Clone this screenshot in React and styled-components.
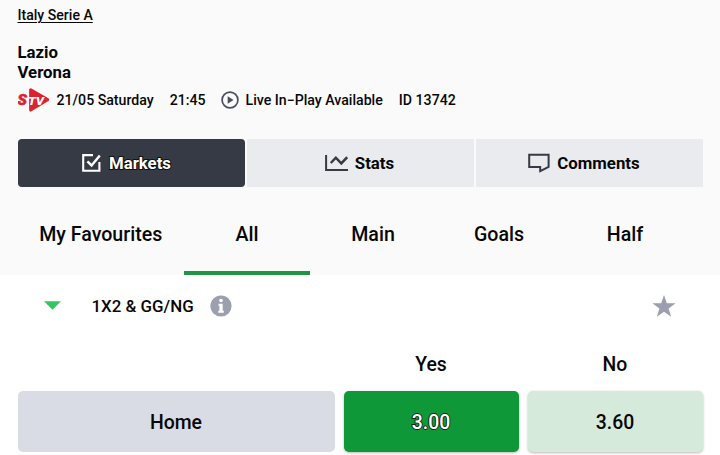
import React, { useState } from 'react';
import styled, { createGlobalStyle } from 'styled-components';

const GlobalStyle = createGlobalStyle`
  * {
    box-sizing: border-box;
  }
  body {
    margin: 0;
    background: #ffffff;
    color: #070707;
    font-family: Roboto, "Liberation Sans", sans-serif;
    overflow: hidden;
  }
  button {
    font-family: inherit;
    color: inherit;
    border: none;
    padding: 0;
    cursor: pointer;
  }
`;

const Page = styled.div`
  width: 720px;
  height: 455px;
  overflow: hidden;
  background: #ffffff;
`;

const Header = styled.header`
  height: 274.5px;
  padding: 5px 17.5px 0 17.5px;
  background: #fafafa;
`;

const League = styled.a`
  display: block;
  width: fit-content;
  height: 20px;
  line-height: 20px;
  font-size: 14.1px;
  font-weight: 500;
  text-decoration: underline;
  text-decoration-thickness: 1px;
  text-underline-offset: 2px;
`;

const Teams = styled.div`
  margin-top: 17px;
  font-size: 16.8px;
  font-weight: 700;
  line-height: 20px;
`;

const Meta = styled.div`
  display: flex;
  align-items: center;
  height: 26px;
  margin-top: 5px;
  font-size: 14.15px;
  font-weight: 500;
  white-space: nowrap;
`;

const MetaItem = styled.span`
  margin-left: ${({ $gap }) => $gap}px;
`;

const Icon = styled.svg`
  display: block;
  flex: none;
`;

const Views = styled.div`
  display: grid;
  grid-template-columns: 227px 227px 227px;
  gap: 2px;
  height: 48.5px;
  margin-top: 25.5px;
`;

const ViewButton = styled.button`
  display: flex;
  align-items: center;
  justify-content: center;
  gap: 7px;
  padding-right: ${({ $shift }) => $shift}px;
  font-size: 16.8px;
  font-weight: 700;
  border-radius: ${({ $active }) => ($active ? '4px' : '0')};
  background: ${({ $active }) => ($active ? '#363a45' : '#eaebef')};
  color: ${({ $active }) => ($active ? '#ffffff' : '#070707')};
  -webkit-text-stroke: ${({ $active }) => ($active ? '2px #111111' : '0')};
  paint-order: stroke fill;
`;

const Tabs = styled.nav`
  display: grid;
  grid-template-columns: 166.5px repeat(4, 126px);
  height: 87.5px;
`;

const Tab = styled.button`
  background: transparent;
  padding-top: 11px;
  border-bottom: 4px solid ${({ $active }) => ($active ? '#1f9445' : 'transparent')};
  font-size: 19.6px;
  font-weight: 500;
`;

const MarketBar = styled.div`
  display: flex;
  align-items: center;
  height: 62.5px;
  padding: 0 44px;
`;

const MarketName = styled.span`
  margin: 0 16px 0 30.5px;
  font-size: 16.9px;
  font-weight: 500;
`;

const StarIcon = styled(Icon)`
  margin-left: auto;
`;

const OddsGrid = styled.div`
  display: grid;
  grid-template-columns: 317px 175px 175px;
  grid-template-rows: 54px 60.5px;
  column-gap: 9px;
  padding: 0 17.5px;
`;

const Column = styled.div`
  display: flex;
  align-items: center;
  justify-content: center;
  font-size: 19.4px;
  font-weight: 500;
`;

const Outcome = styled(Column)`
  padding-top: 2px;
  border-radius: 5px;
  background: #dadce5;
`;

const Odd = styled.button`
  padding-top: 2px;
  border-radius: 5px;
  font-size: 19.4px;
  font-weight: 500;
  background: ${({ $selected }) => ($selected ? '#0f9837' : '#d6eadc')};
  color: ${({ $selected }) => ($selected ? '#ffffff' : '#070707')};
  -webkit-text-stroke: ${({ $selected }) => ($selected ? '1.8px #10200f' : '0')};
  paint-order: stroke fill;
  box-shadow: 0 1px 3px rgba(0, 0, 0, 0.28);
`;

const LogoText = styled.text`
  font-family: Roboto, sans-serif;
  font-style: italic;
  font-weight: 900;
`;

const StvLogo = () => (
  <Icon width="32" height="26" viewBox="0 0 32 26">
    <path
      d="M12.7 2.8 L29.6 12.6 L12.7 23 Z"
      fill="#da2430"
      stroke="#da2430"
      strokeWidth="3.2"
      strokeLinejoin="round"
    />
    <LogoText x="-0.4" y="18" fontSize="15.5" fill="#da2430" stroke="#da2430" strokeWidth="0.6">S</LogoText>
    <LogoText x="10" y="17.6" fontSize="11.8" fill="#ffffff" textLength="16" lengthAdjust="spacingAndGlyphs">TV</LogoText>
  </Icon>
);

const PlayIcon = () => (
  <Icon width="18" height="18" viewBox="0 0 18 18">
    <circle cx="9" cy="9" r="7.9" fill="none" stroke="#4a4e5a" strokeWidth="1.7" />
    <path d="M6.7 5.2 L12.5 9 L6.7 12.8 Z" fill="#4a4e5a" />
  </Icon>
);

const MarketsIcon = () => (
  <Icon width="21" height="20" viewBox="0 0 21 20" fill="none" stroke="#ffffff" strokeWidth="2.1">
    <path d="M12 2.1 H2.2 V17.8 H18.4 V9" />
    <path d="M6.4 8.3 L10.6 12.4 L18.8 2.6" strokeWidth="2.4" />
  </Icon>
);

const StatsIcon = () => (
  <Icon width="23" height="18" viewBox="0 0 23 18" fill="none" stroke="#363a45">
    <path d="M1.1 1 V16.1 H23" strokeWidth="2" />
    <path d="M5.8 9 L10.8 3.7 L16.3 9.4 L22.2 3.2" strokeWidth="2.5" />
  </Icon>
);

const CommentsIcon = () => (
  <Icon width="22" height="20" viewBox="0 0 22 20" fill="none" stroke="#363a45" strokeWidth="2">
    <path d="M1.2 1.7 H20.6 V14 L12.2 18.2 V14 H1.2 Z" />
  </Icon>
);

const InfoIcon = () => (
  <Icon width="22" height="22" viewBox="0 0 22 22">
    <circle cx="11" cy="11" r="10.6" fill="#9b9fae" />
    <circle cx="11" cy="5.5" r="1.8" fill="#ffffff" />
    <path d="M8.5 8.8 H12.7 V15.8 H13.8 V17.8 H8.2 V15.8 H9.4 V10.7 H8.5 Z" fill="#ffffff" />
  </Icon>
);

const VIEWS = [
  { label: 'Markets', icon: MarketsIcon, shift: 10 },
  { label: 'Stats', icon: StatsIcon, shift: 1 },
  { label: 'Comments', icon: CommentsIcon, shift: 10 },
];

const TABS = ['My Favourites', 'All', 'Main', 'Goals', 'Half'];

const App = () => {
  const [view, setView] = useState('Markets');
  const [tab, setTab] = useState('All');
  const [odd, setOdd] = useState('3.00');

  return (
    <Page>
      <GlobalStyle />
      <Header>
        <League>Italy Serie A</League>
        <Teams>
          <div>Lazio</div>
          <div>Verona</div>
        </Teams>
        <Meta>
          <StvLogo />
          <MetaItem $gap={7}>21/05 Saturday</MetaItem>
          <MetaItem $gap={16}>21:45</MetaItem>
          <MetaItem $gap={15}><PlayIcon /></MetaItem>
          <MetaItem $gap={7}>Live In−Play Available</MetaItem>
          <MetaItem $gap={16}>ID 13742</MetaItem>
        </Meta>
        <Views>
          {VIEWS.map(({ label, icon: ViewIcon, shift }) => (
            <ViewButton
              key={label}
              $active={view === label}
              $shift={shift}
              onClick={() => setView(label)}
            >
              <ViewIcon />
              {label}
            </ViewButton>
          ))}
        </Views>
        <Tabs>
          {TABS.map((name) => (
            <Tab key={name} $active={tab === name} onClick={() => setTab(name)}>{name}</Tab>
          ))}
        </Tabs>
      </Header>
      <MarketBar>
        <Icon width="17" height="9" viewBox="0 0 17 9">
          <path d="M0 0.3 H17 L8.5 8.8 Z" fill="#35c75f" />
        </Icon>
        <MarketName>1X2 &amp; GG/NG</MarketName>
        <InfoIcon />
        <StarIcon width="24" height="22" viewBox="0 0 24 22">
          <path
            d="M12 0 L14.8 8.2 L23.6 8.3 L16.6 13.4 L19.1 21.7 L12 16.8 L4.9 21.7 L7.4 13.4 L0.4 8.3 L9.2 8.2 Z"
            fill="#9b9fae"
          />
        </StarIcon>
      </MarketBar>
      <OddsGrid>
        <Column />
        <Column>Yes</Column>
        <Column>No</Column>
        <Outcome>Home</Outcome>
        {['3.00', '3.60'].map((value) => (
          <Odd key={value} $selected={odd === value} onClick={() => setOdd(value)}>{value}</Odd>
        ))}
      </OddsGrid>
    </Page>
  );
};

export default App;
